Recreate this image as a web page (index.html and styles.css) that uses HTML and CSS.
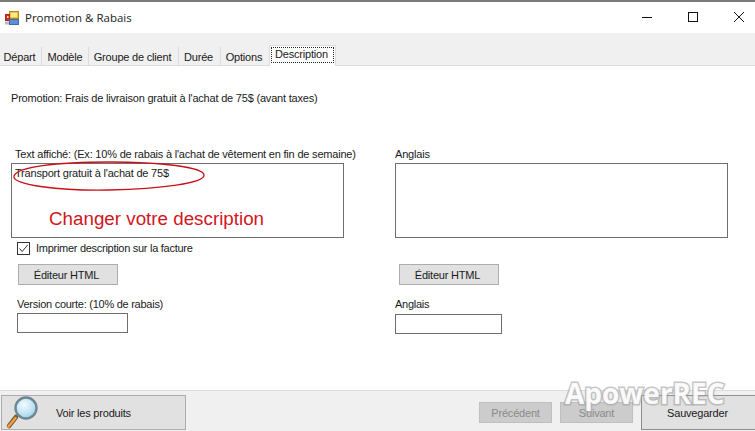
FILE: index.html
```html
<!DOCTYPE html>
<html lang="fr">
<head>
<meta charset="utf-8">
<title>Promotion &amp; Rabais</title>
<link rel="stylesheet" href="styles.css">
</head>
<body>
<div class="window">
  <header class="titlebar">
    <svg class="app-icon" width="14" height="14" viewBox="0 0 14 14">
      <rect x="4.5" y="0.5" width="9" height="7" fill="#f4c430" stroke="#b08a2a"/>
      <rect x="6" y="2" width="6" height="4" fill="#ffe98a"/>
      <rect x="0.5" y="3.5" width="4" height="6" fill="#d8301f" stroke="#a02a20"/>
      <rect x="2" y="5" width="1.5" height="2" fill="#ffd9d0"/>
      <rect x="4.5" y="8.5" width="9" height="5" fill="#5b8fd6" stroke="#3f6aa8"/>
      <rect x="0" y="10.5" width="4" height="3" fill="#b9b9b9"/>
    </svg>
    <span class="title">Promotion &amp; Rabais</span>
    <div class="controls">
      <svg width="12" height="12" viewBox="0 0 12 12"><path d="M1 6.5H11" stroke="#111" fill="none"/></svg>
      <svg width="12" height="12" viewBox="0 0 12 12"><rect x="1.5" y="1.5" width="9" height="9" stroke="#111" fill="none"/></svg>
      <svg width="12" height="12" viewBox="0 0 12 12"><path d="M1 1L11 11M11 1L1 11" stroke="#111" fill="none"/></svg>
    </div>
  </header>

  <nav class="tabs">
    <span class="tab tab-depart">Départ</span>
    <span class="tab tab-modele">Modèle</span>
    <span class="tab tab-groupe">Groupe de client</span>
    <span class="tab tab-duree">Durée</span>
    <span class="tab tab-options">Options</span>
    <span class="tab tab-active"><span class="focus">Description</span></span>
  </nav>

  <main class="content">
    <p class="promo">Promotion: Frais de livraison gratuit à l'achat de 75$ (avant taxes)</p>
    <div class="columns">
      <section class="col col-left">
        <label class="lbl lbl-main">Text affiché: (Ex: 10% de rabais à l'achat de vêtement en fin de semaine)</label>
        <div class="textbox textbox-left">Transport gratuit à l'achat de 75$</div>
        <div class="check-row">
          <span class="checkbox"><svg width="11" height="11" viewBox="0 0 11 11"><path d="M1.5 5.5L4.2 8.5L9.8 1.8" stroke="#333" stroke-width="1" fill="none"/></svg></span>
          <span>Imprimer description sur la facture</span>
        </div>
        <button class="btn btn-html">Éditeur HTML</button>
        <label class="lbl lbl-short">Version courte: (10% de rabais)</label>
        <div class="input input-left"></div>
      </section>
      <section class="col col-right">
        <label class="lbl lbl-main">Anglais</label>
        <div class="textbox textbox-right"></div>
        <button class="btn btn-html btn-html-right">Éditeur HTML</button>
        <label class="lbl lbl-short">Anglais</label>
        <div class="input input-right"></div>
      </section>
    </div>
  </main>

  <footer class="footer">
    <button class="btn big btn-voir">
      <svg class="loupe" width="36" height="35" viewBox="0 0 36 35">
        <defs>
          <radialGradient id="glass" cx="0.4" cy="0.35" r="0.75">
            <stop offset="0" stop-color="#f2fbff"/>
            <stop offset="0.6" stop-color="#bfe2f4"/>
            <stop offset="1" stop-color="#8fc3e2"/>
          </radialGradient>
        </defs>
        <path d="M12 22L5 31" stroke="#7a5a35" stroke-width="4.5" stroke-linecap="round"/>
        <path d="M11.5 23L4.5 31.5" stroke="#f0a040" stroke-width="2.5" stroke-linecap="round"/>
        <circle cx="22" cy="13" r="10.5" fill="url(#glass)" stroke="#6f8793" stroke-width="2.4"/>
      </svg>
      <span>Voir les produits</span>
    </button>
    <div class="footer-right">
      <button class="btn small" disabled>Précédent</button>
      <button class="btn small" disabled>Suivant</button>
      <button class="btn big btn-save">Sauvegarder</button>
    </div>
  </footer>

  <svg class="ellipse" width="196" height="32" viewBox="0 0 196 32">
    <path d="M3 16C6 7 45 2 98 2C150 2 192 7 193 15C194 23 150 29 98 30C50 31 0 25 3 16Z" fill="none" stroke="#c8101a" stroke-width="1.3"/>
  </svg>
  <span class="annotation">Changer votre description</span>
  <span class="watermark">ApowerREC</span>
</div>
</body>
</html>
```
FILE: styles.css
```css
* { box-sizing: border-box; }
html, body { margin: 0; padding: 0; background: #fff; }
body { width: 755px; height: 431px; overflow: hidden; font: 11px "Liberation Sans", Arial, sans-serif; letter-spacing: -0.2px; color: #1a1a1a; }
.window { position: relative; width: 755px; height: 431px; display: flex; flex-direction: column; border-top: 2px solid #7b7b7b; }

.titlebar { height: 31px; display: flex; align-items: center; padding-left: 5px; background: #fff; flex: none; }
.app-icon { margin-right: 6px; margin-top: 0; }
.title { font: 11.5px "Open Sans", sans-serif; letter-spacing: 0; color: #222; }
.controls { margin-left: auto; display: flex; gap: 34px; padding-right: 10px; margin-top: -1px; }

.tabs { height: 33px; flex: none; background: #f0f0f0; display: flex; align-items: flex-end; border-bottom: 1px solid #dcdcdc; padding-left: 0; }
.tab { height: 18px; display: flex; align-items: center; justify-content: center; border-right: 1px solid #dcdcdc; flex: none; padding-top: 1px; }
.tab-depart { width: 42px; padding-right: 2px; }
.tab-modele { width: 47px; }
.tab-groupe { width: 90px; padding-right: 2px; }
.tab-duree { width: 42px; padding-right: 2px; }
.tab-options { width: 48px; border-right: 0; padding-right: 2px; }
.tab-active { width: 67px; height: 21px; background: #fff; border: 1px solid #dcdcdc; border-bottom: 0; margin-bottom: -1px; padding: 1px 1px 3px; }
.focus { display: block; width: 100%; height: 100%; line-height: 14px; text-align: center; padding-right: 2px; outline: 1px dotted #222; outline-offset: -1px; }

.content { flex: 1; background: #fff; padding: 25px 0 0 0; }
.promo { margin: 0 0 0 11px; height: 14px; line-height: 14px; }
.columns { display: flex; margin-top: 42px; }
.col { display: flex; flex-direction: column; align-items: flex-start; }
.col-left { width: 395px; padding-left: 11px; }
.col-right { flex: 1; padding-left: 0; }
.lbl { display: block; height: 14px; line-height: 14px; }
.lbl-main { margin-left: 4px; margin-bottom: 2px; }
.col-right .lbl-main { margin-left: 0; }
.textbox { height: 75px; border: 1px solid #6e6e6e; background: #fff; padding: 2px 3px; line-height: 14px; }
.textbox-left { width: 333px; }
.textbox-right { width: 333px; margin-bottom: 26px; }
.check-row { display: flex; align-items: center; height: 14px; margin: 3px 0 0 6px; gap: 6px; letter-spacing: -0.28px; }
.checkbox { width: 13px; height: 13px; border: 1px solid #333; background: #fff; display: flex; align-items: center; justify-content: center; }
.btn { font: inherit; letter-spacing: inherit; color: inherit; background: #e1e1e1; border: 1px solid #adadad; padding: 0; display: flex; align-items: center; justify-content: center; }
.btn-html { width: 100px; height: 21px; margin: 9px 0 0 7px; padding-right: 3px; }
.btn-html-right { margin: 0 0 0 4px; }
.lbl-short { margin-top: 12px; margin-left: 6px; margin-bottom: 2px; letter-spacing: -0.26px; }
.col-right .lbl-short { margin-left: 0; margin-bottom: 3px; }
.input { height: 20px; border: 1px solid #6e6e6e; background: #fff; }
.input-left { width: 111px; margin-left: 6px; }
.input-right { width: 107px; }

.footer { height: 41px; flex: none; background: #f0f0f0; border-top: 1px solid #dcdcdc; display: flex; justify-content: space-between; padding: 4px 0 1px 1px; }
.btn.big { height: 35px; }
.btn-voir { width: 185px; justify-content: flex-start; position: relative; padding-left: 54px; }
.loupe { position: absolute; left: 2px; top: -1px; }
.footer-right { display: flex; align-items: center; gap: 8px; }
.btn.small { width: 73px; height: 21px; background: #cccccc; border-color: #bfbfbf; color: #8a8a8a; }
.btn-save { width: 114px; border-right: 0; border-color: #8f8f8f; margin-left: 0; padding-right: 2px; }

.ellipse { position: absolute; left: 11px; top: 158px; }
.annotation { position: absolute; left: 49px; top: 206px; font: 18.8px "Liberation Sans", Arial, sans-serif; letter-spacing: 0; color: #d2161c; white-space: nowrap; }
.watermark { position: absolute; left: 565px; top: 372px; font: bold 28px "Open Sans", sans-serif; letter-spacing: 0; color: rgba(255,255,255,.92); -webkit-text-stroke: 3px rgba(160,160,160,.6); paint-order: stroke fill; white-space: nowrap; }
```
